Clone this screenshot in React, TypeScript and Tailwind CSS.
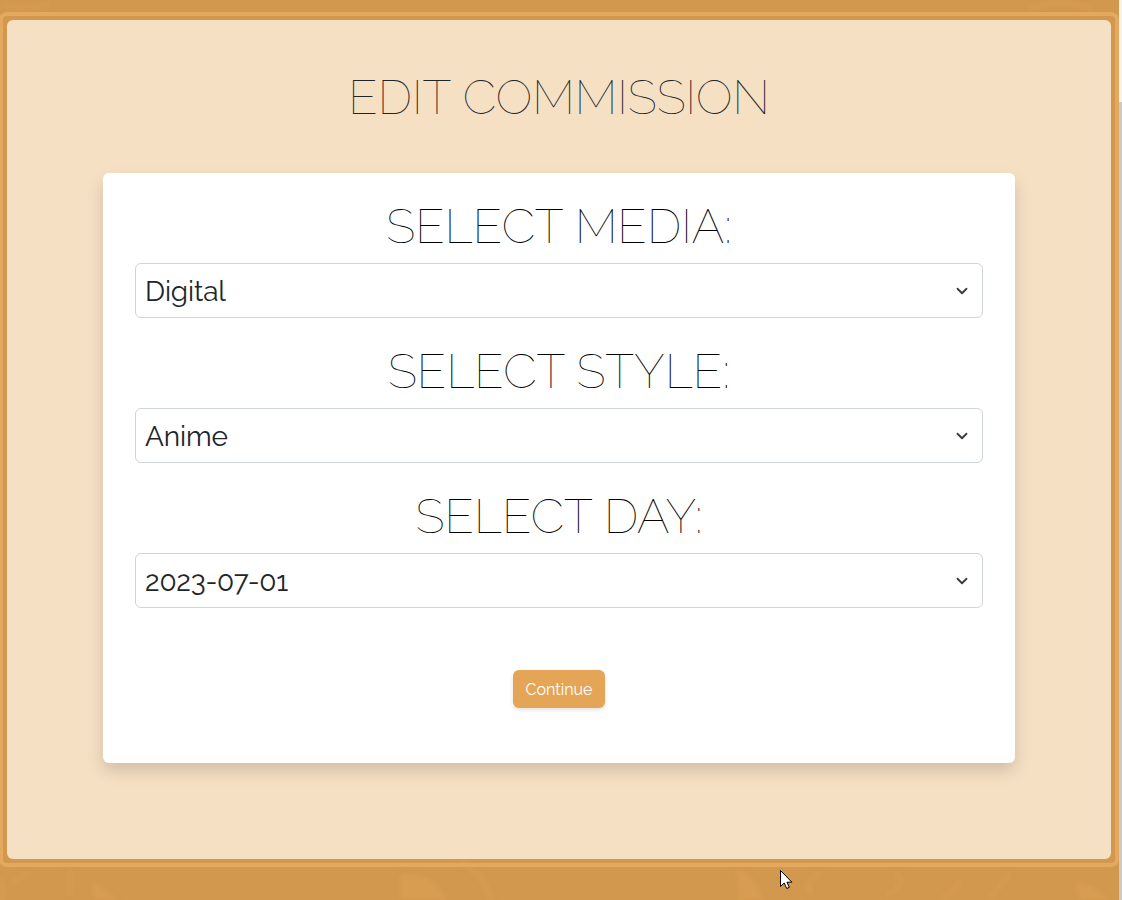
import React from "react";

type Field = {
  label: string;
  value: string;
  valueClass: string;
};

const fields: Field[] = [
  { label: "SELECT MEDIA:", value: "Digital", valueClass: "tracking-[-0.14px]" },
  { label: "SELECT STYLE:", value: "Anime", valueClass: "tracking-[-0.14px]" },
  { label: "SELECT DAY:", value: "2023-07-01", valueClass: "tracking-[-0.2px]" },
];

function Chevron() {
  return (
    <svg viewBox="0 0 16 16" className="h-3 w-3 shrink-0" fill="none" stroke="#343a40" strokeWidth="2.4" strokeLinecap="round" strokeLinejoin="round">
      <path d="m2 5 6 6 6-6" />
    </svg>
  );
}

function SelectField({ field }: { field: Field }) {
  return (
    <div className="mb-6 flex flex-col">
      <h2 className="flex h-[58px] items-center justify-center whitespace-nowrap text-[48px] font-thin leading-[58px] tracking-[0.05px] text-black">
        {field.label}
      </h2>
      <button type="button" className="mt-2 flex h-[55px] w-full items-center justify-between rounded-md border border-[#ced4da] bg-white pl-[9px] pr-[14px] text-left text-[28px] leading-[42px] text-[#212529]">
        <span className={`pt-0.5 ${field.valueClass}`}>{field.value}</span>
        <Chevron />
      </button>
    </div>
  );
}

export default function App() {
  return (
    <div className="relative flex h-[900px] w-[1122px] overflow-hidden bg-[#d2984d] font-['Raleway','Lato',sans-serif]">
      <svg className="absolute inset-0 h-[900px] w-[1119px] blur-[2px]" viewBox="0 0 1119 900" fill="none">
        <path d="M0 876q8 10 5 24H0zM91 880l28 20H95zM736 868q22 8 27 32h-24zM1074 881q23 3 35 19h-29zM400 874q35-3 47 26h-47z" fill="#dca055" opacity=".6" />
        <path d="M460 862q24 11 31 38M820 872q-18 13-8 23M895 872q15 13-9 23M960 882l-18 18M1010 873l-21 27M70 868v28M10 884l20-12M0 4q20 8 50 0M1030 8q30-10 62 0" stroke="#dca055" strokeWidth="6" opacity=".45" />
      </svg>
      <main className="relative -ml-px mt-3 flex h-[855px] w-[1120px] shrink-0 rounded-lg border-4 border-[#e4a85e] p-1">
        <section className="flex flex-1 flex-col items-center rounded-md bg-[#f6e0c4] pt-12">
          <h1 className="flex h-[58px] items-center whitespace-nowrap text-[48px] font-thin leading-[58px] tracking-[0.05px] text-[#212529]">EDIT COMMISSION</h1>
          <div className="mt-[47px] flex h-[590px] w-[912px] flex-col rounded-md bg-white px-8 pt-6 shadow-[0_8px_16px_rgba(0,0,0,0.15)]">
            {fields.map((field) => (
              <SelectField key={field.label} field={field} />
            ))}
            <button type="button" className="mt-[38px] h-[38px] w-[92px] self-center rounded-md bg-[#e4a556] pt-0.5 text-base leading-6 text-white shadow-[0_2px_4px_rgba(0,0,0,0.12)]">
              Continue
            </button>
          </div>
        </section>
      </main>
      <div className="relative flex w-[3px] shrink-0 flex-col bg-[#cccac8]">
        <div className="h-[102px] bg-[#f5f2ee]" />
      </div>
      <svg className="absolute left-[780px] top-[870px] h-[20px] w-[13px]" viewBox="0 0 13 20" fill="white" stroke="black" strokeWidth="1">
        <path d="M.5.5v16l3.7-3.5 2.5 5.5 2.6-1.2-2.4-5.1h5z" />
      </svg>
    </div>
  );
}
